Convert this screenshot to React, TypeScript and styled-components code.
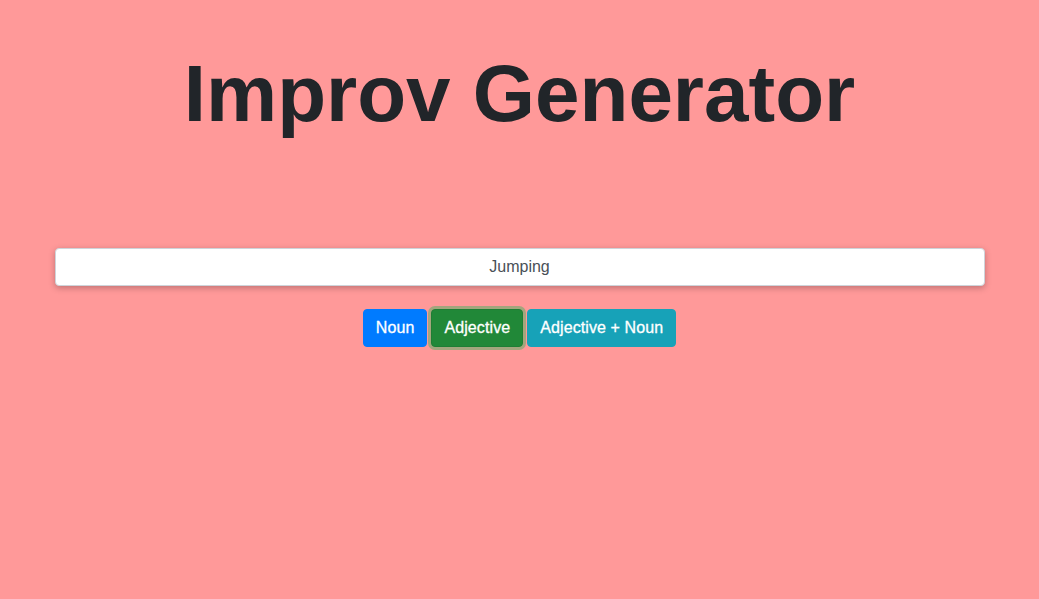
import React from "react";
import styled, { createGlobalStyle } from "styled-components";

const Global = createGlobalStyle`
  html, body { margin: 0; padding: 0; }
  body {
    background: #ff9999;
    font-family: "Liberation Sans", Arial, sans-serif;
    color: #212529;
    min-height: 599px;
  }
  * { box-sizing: border-box; }
`;

const Container = styled.div`
  max-width: 960px;
  margin: 0 auto;
  padding: 46px 15px 0;
  display: flex;
  flex-direction: column;
  align-items: stretch;
`;

const Title = styled.h1`
  margin: 0 0 106px;
  font-family: "Liberation Sans", Arial, sans-serif;
  font-weight: 700;
  font-size: 80px;
  line-height: 96px;
  text-align: center;
  color: #212529;
`;

const Field = styled.input`
  display: block;
  width: 100%;
  height: 38px;
  padding: 6px 12px;
  font-family: "Liberation Sans", Arial, sans-serif;
  font-size: 16px;
  line-height: 1.5;
  color: #495057;
  text-align: center;
  background: #fff;
  border: 1px solid #ced4da;
  border-radius: 4px;
  box-shadow: 0 2px 6px rgba(0, 0, 0, 0.25);
  outline: none;
`;

const ButtonRow = styled.div`
  display: flex;
  justify-content: center;
  gap: 4px;
  margin-top: 23px;
`;

const palette = {
  primary: { bg: "#007bff", border: "#007bff" },
  success: { bg: "#218838", border: "#1e7e34" },
  info: { bg: "#17a2b8", border: "#17a2b8" },
};

const Button = styled.button<{ $variant: keyof typeof palette; $focused?: boolean }>`
  font-family: "Liberation Sans", Arial, sans-serif;
  font-size: 16px;
  line-height: 24px;
  padding: 6px 12px;
  color: #fff;
  -webkit-text-stroke: 0.3px #fff;
  letter-spacing: 0.1px;
  background: ${(p) => palette[p.$variant].bg};
  border: 1px solid ${(p) => palette[p.$variant].border};
  border-radius: 4px;
  cursor: pointer;
  box-shadow: ${(p) => (p.$focused ? "0 0 0 3px rgba(72, 180, 97, 0.5)" : "none")};
  outline: none;
`;

export default function App() {
  return (
    <>
      <Global />
      <Container>
        <Title>Improv Generator</Title>
        <Field readOnly value="Jumping" />
        <ButtonRow>
          <Button $variant="primary">Noun</Button>
          <Button $variant="success" $focused>Adjective</Button>
          <Button $variant="info">Adjective + Noun</Button>
        </ButtonRow>
      </Container>
    </>
  );
}
